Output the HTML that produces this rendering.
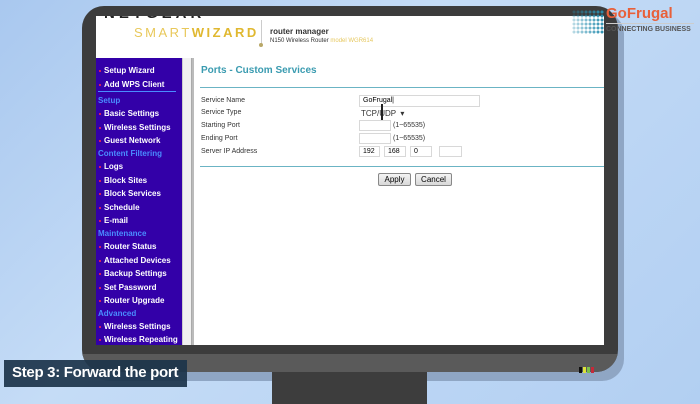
<!DOCTYPE html><html><head><style>
*{margin:0;padding:0;box-sizing:border-box}
body{width:700px;height:404px;overflow:hidden;position:relative;background:linear-gradient(135deg,#a9c8ef 0%,#c5dcf6 40%,#b2cff2 100%);font-family:"Liberation Sans",sans-serif}
.abs{position:absolute}
.shadow{left:88px;top:12px;width:536px;height:369px;background:#8fa6c4;border-radius:22px}
.mon{left:82px;top:6px;width:536px;height:366px;background:#3c3c3c;border-radius:22px;overflow:hidden}
.bez{left:0;top:348px;width:536px;height:22px;background:#5a5a5a}
.stand{left:272px;top:372px;width:155px;height:32px;background:#3d3d3d}
.screen{left:96px;top:16px;width:508px;height:329px;background:#fff;overflow:hidden}
.side{left:0;top:42px;width:86px;height:287px;background:#3300a8}
.side div{position:absolute;left:8px;font-size:8px;font-weight:bold;color:#fff;white-space:nowrap}
.side div:before{content:"";position:absolute;left:-5px;top:4px;width:2px;height:2px;background:#d02060}
.side .h{left:2px;color:#4a8cff;font-weight:bold}
.side .h:before{display:none}
.sb{left:86px;top:42px;width:10px;height:287px;background:#f0f0f0;border-left:1px solid #ccc;border-right:1px solid #aaa}
.ct{font-size:7px;color:#333}
.in{position:absolute;border:1px solid #d8d8d8;background:#fff;height:11px;font-size:7px;padding-left:3px;line-height:10px}
.btn{position:absolute;border:1px solid #888;background:linear-gradient(#f4f4f4,#d8d8d8);font-size:8px;height:13px;line-height:11px;text-align:center;border-radius:2px}
</style></head><body>
<div class="abs shadow"></div>
<div class="abs mon"><div class="abs bez"></div></div>
<div class="abs stand"></div>
<div class="abs" style="left:579px;top:367px;width:3px;height:6px;background:#111"></div>
<div class="abs" style="left:583px;top:367px;width:3px;height:6px;background:#dde23a"></div>
<div class="abs" style="left:587px;top:367px;width:3px;height:6px;background:#7cc24a"></div>
<div class="abs" style="left:591px;top:367px;width:3px;height:6px;background:#c42a3a"></div>
<div class="abs screen">
 <div class="abs" style="left:8px;top:-11px;font-size:15px;font-weight:bold;color:#222;letter-spacing:4px">NETGEAR</div>
 <div class="abs" style="left:38px;top:9px;font-size:13px;color:#e8c85a;letter-spacing:2.5px">SMART<b style="color:#e0b830">WIZARD</b></div>
 <div class="abs" style="left:165px;top:4px;width:1px;height:24px;background:#ccc"></div>
 <div class="abs" style="left:163px;top:27px;width:4px;height:4px;border-radius:2px;background:#b9a868"></div>
 <div class="abs" style="left:174px;top:11px;font-size:8px;font-weight:bold;color:#333">router manager</div>
 <div class="abs" style="left:174px;top:22px;font-size:6px;color:#333">N150 Wireless Router <span style="color:#e6c860">model WGR614</span></div>
 <div class="abs side">
  <div style="top:8px">Setup Wizard</div><div style="top:22px">Add WPS Client</div>
  <div class="abs" style="left:2px;top:33px;width:78px;height:1px;background:#4a8cff"></div>
  <div class="h" style="top:38px">Setup</div>
  <div style="top:51px">Basic Settings</div><div style="top:65px">Wireless Settings</div><div style="top:78px">Guest Network</div>
  <div class="h" style="top:91px">Content Filtering</div>
  <div style="top:104px">Logs</div><div style="top:118px">Block Sites</div><div style="top:131px">Block Services</div><div style="top:145px">Schedule</div><div style="top:158px">E-mail</div>
  <div class="h" style="top:171px">Maintenance</div>
  <div style="top:184px">Router Status</div><div style="top:198px">Attached Devices</div><div style="top:211px">Backup Settings</div><div style="top:225px">Set Password</div><div style="top:238px">Router Upgrade</div>
  <div class="h" style="top:251px">Advanced</div>
  <div style="top:264px">Wireless Settings</div><div style="top:277px">Wireless Repeating</div>
 </div>
 <div class="abs sb"></div>
 <div class="abs" style="left:96px;top:42px;width:2px;height:287px;background:#bbb"></div>
 <div class="abs" style="left:105px;top:49px;font-size:10px;font-weight:bold;color:#3a9bb0">Ports - Custom Services</div>
 <div class="abs" style="left:104px;top:71px;width:404px;height:1px;background:#6bb4c4"></div>
 <div class="abs ct" style="left:105px;top:81px">Service Name</div>
 <div class="abs ct" style="left:105px;top:93px">Service Type</div>
 <div class="abs ct" style="left:105px;top:106px">Starting Port</div>
 <div class="abs ct" style="left:105px;top:119px">Ending Port</div>
 <div class="abs ct" style="left:105px;top:132px">Server IP Address</div>
 <div class="in" style="left:263px;top:79px;width:121px;height:12px">GoFrugal|</div>
 <div class="abs ct" style="left:265px;top:93px;font-size:8px">TCP/UDP &nbsp;▾</div>
 <div class="abs" style="left:285px;top:88px;width:2px;height:22px;background:#222"></div>
 <div class="in" style="left:263px;top:104px;width:32px"></div><div class="abs ct" style="left:297px;top:106px">(1~65535)</div>
 <div class="in" style="left:263px;top:117px;width:32px"></div><div class="abs ct" style="left:297px;top:119px">(1~65535)</div>
 <div class="in" style="left:263px;top:130px;width:21px">192</div>
 <div class="in" style="left:288px;top:130px;width:22px">168</div>
 <div class="in" style="left:314px;top:130px;width:22px">0</div>
 <div class="in" style="left:343px;top:130px;width:23px"></div>
 <div class="abs" style="left:104px;top:150px;width:404px;height:1px;background:#6bb4c4"></div>
 <div class="btn" style="left:282px;top:157px;width:33px">Apply</div>
 <div class="btn" style="left:319px;top:157px;width:37px">Cancel</div>
</div>
<div class="abs" style="left:572px;top:10px;width:32px;height:24px;background:radial-gradient(circle,#2a8fb0 1.3px,transparent 1.7px) 0 0/4px 4px;-webkit-mask:linear-gradient(90deg,rgba(0,0,0,.3),#000)"></div>
<div class="abs" style="left:606px;top:5px;font-size:15px;font-weight:bold;color:#e8603a">GoFrugal</div>
<div class="abs" style="left:606px;top:23px;width:88px;height:1px;background:#ccc"></div>
<div class="abs" style="left:606px;top:26px;font-size:7px;font-weight:bold;color:#555">CONNECTING BUSINESS</div>
<div class="abs" style="left:4px;top:360px;width:183px;height:27px;background:rgba(28,52,74,.92)"></div>
<div class="abs" style="left:12px;top:364px;font-size:15px;font-weight:bold;color:#fff;letter-spacing:-0.3px">Step 3: Forward the port</div>
</body></html>
